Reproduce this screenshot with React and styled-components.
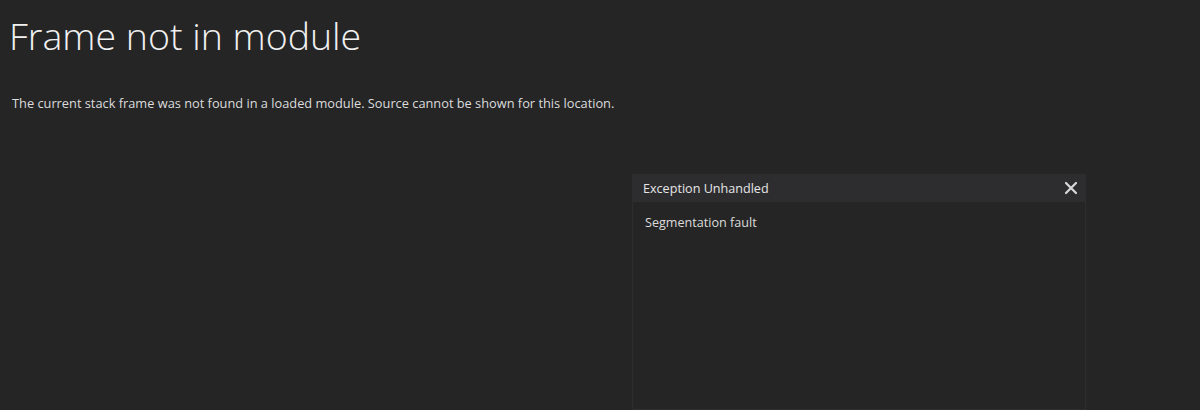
import React from "react";
import styled, { createGlobalStyle } from "styled-components";

const GlobalStyle = createGlobalStyle`
  html, body {
    margin: 0;
    padding: 0;
    background: #252526;
    overflow: hidden;
  }
  body {
    font-family: "Open Sans", "Noto Sans", sans-serif;
    color: #dcdcdc;
  }
`;

const Page = styled.div`
  width: 1200px;
  height: 410px;
  background: #252526;
  display: flex;
  flex-direction: column;
  box-sizing: border-box;
  padding: 11px 0 0 9px;
`;

const Title = styled.h1`
  margin: 0;
  font-family: "Open Sans", sans-serif;
  font-weight: 300;
  font-size: 37.5px;
  line-height: 50px;
  color: #f1f1f1;
`;

const Message = styled.p`
  margin: 32px 0 0 3px;
  font-size: 12.8px;
  line-height: 20px;
  color: #dcdcdc;
`;

const Area = styled.div`
  flex: 1;
  display: flex;
  padding: 61px 0 0 623px;
`;

const Dialog = styled.div`
  width: 454px;
  display: flex;
  flex-direction: column;
  align-self: stretch;
`;

const Header = styled.div`
  height: 28px;
  background: #2d2d30;
  display: flex;
  align-items: center;
  justify-content: space-between;
  padding: 0 5px 0 11px;
  font-size: 12.6px;
  color: #e6e6e6;
`;

const Close = styled.button`
  border: none;
  background: none;
  padding: 0;
  width: 20px;
  height: 20px;
  display: flex;
  align-items: center;
  justify-content: center;
  cursor: pointer;
`;

const Body = styled.div`
  flex: 1;
  border: 1px solid #2d2d30;
  border-top: none;
  background: #252526;
  padding: 12px 12px;
  font-size: 12.6px;
  color: #dcdcdc;
`;

export default function App() {
  return (
    <>
      <GlobalStyle />
      <Page>
        <Title>Frame not in module</Title>
        <Message>
          The current stack frame was not found in a loaded module. Source cannot be shown for this location.
        </Message>
        <Area>
          <Dialog>
            <Header>
              <span>Exception Unhandled</span>
              <Close aria-label="Close">
                <svg width="14" height="14" viewBox="0 0 14 14">
                  <path d="M2 2 L12 12 M12 2 L2 12" stroke="#d8d8d8" strokeWidth="2.2" strokeLinecap="round" />
                </svg>
              </Close>
            </Header>
            <Body>Segmentation fault</Body>
          </Dialog>
        </Area>
      </Page>
    </>
  );
}
